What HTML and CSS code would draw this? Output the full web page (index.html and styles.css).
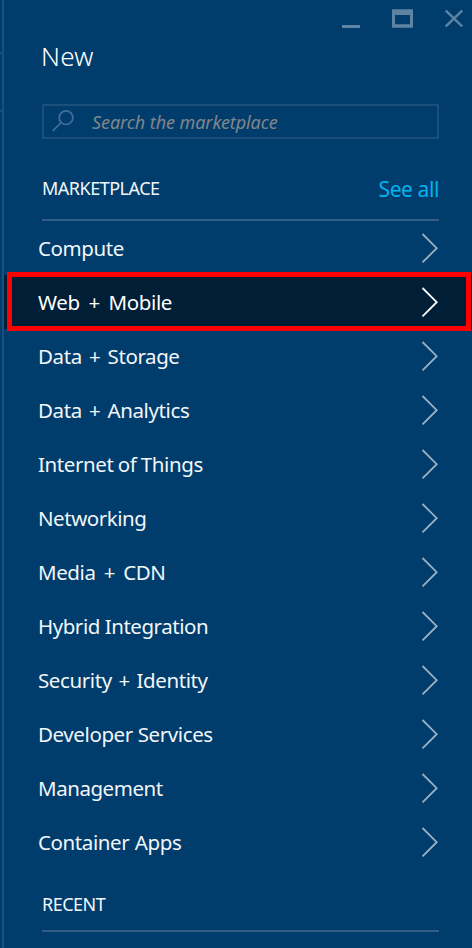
FILE: index.html
```html
<!DOCTYPE html>
<html lang="en">
<head>
<meta charset="utf-8">
<title>New</title>
<link rel="stylesheet" href="styles.css">
</head>
<body>
<div class="screen">
  <div class="rail"><div class="rail-cell"></div></div>
  <main class="blade">
    <header class="top">
      <div class="controls">
        <svg width="18" height="20" viewBox="0 0 18 20"><path d="M0 17.5h18" stroke="#5e83a3" stroke-width="3"/></svg>
        <svg width="21" height="20" viewBox="0 0 21 20"><path fill="#5e83a3" fill-rule="evenodd" d="M0 .3h21v18.4H0zM3 6v9.300h15V6z"/></svg>
        <svg width="18" height="20" viewBox="0 0 18 20"><path d="M.8 1.500l16.400 16M17.200 1.500l-16.400 16" stroke="#5e83a3" stroke-width="2.4"/></svg>
      </div>
      <h1 class="title"><span>New</span></h1>
      <div class="search">
        <svg class="lens" width="22" height="22" viewBox="0 0 22 22" fill="none" stroke="#41709a" stroke-width="1.700"><circle cx="14" cy="7.700" r="6.800"/><path d="M9.200 12.500L.8 20.900"/></svg>
        <span class="placeholder">Search the marketplace</span>
      </div>
    </header>
    <div class="section"><h2 class="heading market">MARKETPLACE</h2><a class="see">See all</a></div>
    <ul class="list">
      <li class="row r1"><span>Compute</span><svg class="arrow" viewBox="0 0 18 32"><path d="M1.500 2L15.700 16.200 1.500 30.400"/></svg></li>
      <li class="row r2 selected"><span>Web + Mobile</span><svg class="arrow" viewBox="0 0 18 32"><path d="M1.500 2L15.700 16.200 1.500 30.400"/></svg></li>
      <li class="row r3"><span>Data + Storage</span><svg class="arrow" viewBox="0 0 18 32"><path d="M1.500 2L15.700 16.200 1.500 30.400"/></svg></li>
      <li class="row r4"><span>Data + Analytics</span><svg class="arrow" viewBox="0 0 18 32"><path d="M1.500 2L15.700 16.200 1.500 30.400"/></svg></li>
      <li class="row r5"><span>Internet of Things</span><svg class="arrow" viewBox="0 0 18 32"><path d="M1.500 2L15.700 16.200 1.500 30.400"/></svg></li>
      <li class="row r6"><span>Networking</span><svg class="arrow" viewBox="0 0 18 32"><path d="M1.500 2L15.700 16.200 1.500 30.400"/></svg></li>
      <li class="row r7"><span>Media + CDN</span><svg class="arrow" viewBox="0 0 18 32"><path d="M1.500 2L15.700 16.200 1.500 30.400"/></svg></li>
      <li class="row r8"><span>Hybrid Integration</span><svg class="arrow" viewBox="0 0 18 32"><path d="M1.500 2L15.700 16.200 1.500 30.400"/></svg></li>
      <li class="row r9"><span>Security + Identity</span><svg class="arrow" viewBox="0 0 18 32"><path d="M1.500 2L15.700 16.200 1.500 30.400"/></svg></li>
      <li class="row r10"><span>Developer Services</span><svg class="arrow" viewBox="0 0 18 32"><path d="M1.500 2L15.700 16.200 1.500 30.400"/></svg></li>
      <li class="row r11"><span>Management</span><svg class="arrow" viewBox="0 0 18 32"><path d="M1.500 2L15.700 16.200 1.500 30.400"/></svg></li>
      <li class="row r12"><span>Container Apps</span><svg class="arrow" viewBox="0 0 18 32"><path d="M1.500 2L15.700 16.200 1.500 30.400"/></svg></li>
    </ul>
    <div class="section recent"><h2 class="heading">RECENT</h2></div>
  </main>
</div>
</body>
</html>
```
FILE: styles.css
```css
* { box-sizing: border-box; }
body { margin: 0; background: #003d6c; color: #f2f6f9; font-family: "Noto Sans", sans-serif; }
.screen { display: flex; width: 472px; height: 948px; overflow: hidden; }
.rail { width: 4px; border-right: 2px solid #1a5080; padding-top: 52px; }
.rail-cell { height: 60px; border: solid #1a5080; border-width: 2px 0; }
.blade { width: 468px; }
.top { height: 139px; padding: 9px 33px 0 38px; }
.controls { display: flex; height: 20px; margin-right: -24px; justify-content: flex-end; }
.controls svg:nth-child(2) { margin: 0 32px; }
.title { margin: 9px 0 0; height: 36px; font-size: 26px; line-height: 36px; font-weight: 300; color: #fff; text-indent: -1px; letter-spacing: .2px; }
.search { display: flex; align-items: center; height: 35px; margin-top: 30px; border: 2px solid #1a4f7b; padding-left: 8px; }
.lens { margin-top: -2px; }
.placeholder { margin-left: 18px; font-size: 18px; font-style: italic; color: #80868b; letter-spacing: -.08px; white-space: nowrap; }
.section { display: flex; justify-content: space-between; align-items: center; height: 82px; margin: 0 33px 0 38px; padding-top: 20px; border-bottom: 2px solid #335f86; }
.heading { margin: -2px 0 0; font-size: 18px; font-weight: 400; letter-spacing: -.5px; }
.see { font-size: 21px; color: #00b3f0; letter-spacing: -.4px; }
.list { list-style: none; margin: 0; padding: 0; }
.row { position: relative; display: flex; align-items: center; justify-content: space-between; height: 54px; padding: 0 33px 0 34px; font-size: 20.5px; letter-spacing: -.4px; white-space: nowrap; }
.r2 { word-spacing: 3.9px; }
.r3, .r4 { word-spacing: 2.3px; }
.r5 { word-spacing: -.6px; }
.r6, .r8, .r11 { letter-spacing: -.46px; }
.r7 { word-spacing: 3.2px; }
.r9 { word-spacing: 1.8px; }
.r12 { word-spacing: .6px; }
.arrow { width: 18px; height: 32px; fill: none; stroke: #99b1c4; stroke-width: 1.800; }
.selected { background: #001e35; color: #fff; }
.selected .arrow { stroke: #fff; }
.selected::after { content: ""; position: absolute; left: 3px; right: 1px; top: -3px; bottom: -2px; border: 5px solid #f00; }
.recent { height: 63px; padding-top: 10px; }
```
